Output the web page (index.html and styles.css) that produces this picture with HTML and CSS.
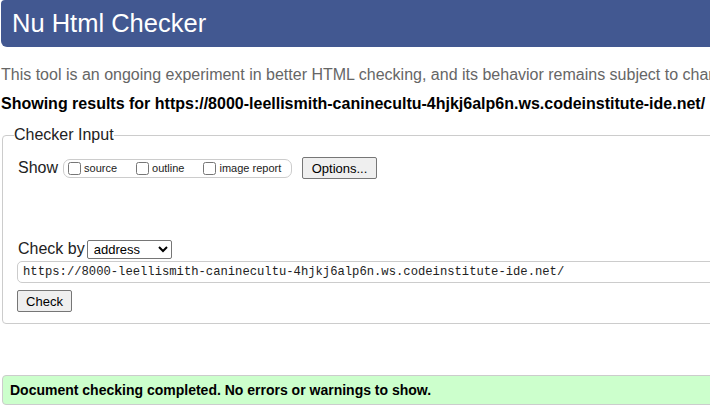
FILE: index.html
```html
<!DOCTYPE html>
<html>
<head>
<meta charset="utf-8">
<title>Nu Html Checker</title>
<link rel="stylesheet" href="styles.css">
</head>
<body>
<div class="page">
  <h1 class="title">Nu Html Checker</h1>
  <p class="intro">This tool is an ongoing experiment in better HTML checking, and its behavior remains subject to change</p>
  <p class="results">Showing results for https://8000-leellismith-caninecultu-4hjkj6alp6n.ws.codeinstitute-ide.net/</p>
  <fieldset class="checker">
    <legend class="legend">Checker Input</legend>
    <div class="show-row">
      <span class="label">Show</span>
      <span class="opts">
        <label class="opt"><input type="checkbox" class="cb">source</label>
        <label class="opt"><input type="checkbox" class="cb">outline</label>
        <label class="opt"><input type="checkbox" class="cb">image report</label>
      </span>
      <button class="btn options">Options...</button>
    </div>
    <div class="check-row">
      <span class="label">Check by</span>
      <select class="sel"><option>address</option></select>
    </div>
    <input class="url" type="text" value="https://8000-leellismith-caninecultu-4hjkj6alp6n.ws.codeinstitute-ide.net/">
    <div class="submit-row"><button class="btn check">Check</button></div>
  </fieldset>
  <p class="status">Document checking completed. No errors or warnings to show.</p>
</div>
</body>
</html>
```
FILE: styles.css
```css
html, body {
  margin: 0;
  padding: 0;
  background: #fff;
  overflow: hidden;
}
body {
  font-family: "Liberation Sans", Arial, sans-serif;
  color: #000;
}
.page {
  width: 960px;
  padding-left: 1px;
}
.title {
  margin: 0;
  height: 47px;
  box-sizing: border-box;
  background: #425891;
  color: #fff;
  font-weight: normal;
  font-size: 25.5px;
  line-height: 47px;
  padding-left: 11px;
  border-radius: 4px 0 0 6px;
}
.intro {
  margin: 18px 0 0 0;
  font-size: 16px;
  line-height: 20px;
  color: #666;
  white-space: nowrap;
}
.results {
  margin: 9px 0 0 0;
  font-size: 16px;
  line-height: 20px;
  font-weight: bold;
  white-space: nowrap;
}
.checker {
  margin: 12px 0 0 1px;
  padding: 0 0 11px 15px;
  border: 1px solid #ccc;
  border-radius: 4px;
  min-width: 0;
}
.legend {
  padding: 0;
  margin-left: -4px;
  font-size: 16px;
  line-height: 18px;
  color: #222;
}
.show-row {
  display: flex;
  align-items: center;
  margin-top: 13px;
  height: 22px;
}
.label {
  font-size: 16px;
  color: #222;
  margin-right: 5px;
}
.opts {
  display: inline-flex;
  align-items: center;
  border: 1px solid #ccc;
  border-radius: 7px;
  height: 17px;
  padding: 0 4px;
  width: 219px;
}
.opt {
  display: inline-flex;
  align-items: center;
  font-size: 11px;
  color: #222;
  margin-right: 19px;
}
.opt:last-child { margin-right: 0; }
.cb {
  margin: 0 3px 0 0;
  width: 13px;
  height: 13px;
}
.btn {
  font-family: "Liberation Sans", Arial, sans-serif;
  font-size: 13px;
  color: #000;
  background: #efefef;
  border: 1px solid #767676;
  border-radius: 2px;
  padding: 1px 6px;
}
.options {
  margin-left: 10px;
  height: 22px;
  width: 75px;
}
.check-row {
  display: flex;
  align-items: center;
  margin-top: 60px;
  height: 20px;
}
.check-row .label {
  margin-right: 2px;
}
.sel {
  font-family: "Liberation Sans", Arial, sans-serif;
  font-size: 13px;
  width: 85px;
  height: 19px;
  border: 1px solid #767676;
  border-radius: 2px;
  background: #fff;
  color: #000;
  padding: 0 2px;
}
.url {
  display: block;
  margin: 2px 0 0 -1px;
  width: 900px;
  height: 22px;
  box-sizing: border-box;
  border: 1px solid #ccc;
  border-radius: 5px;
  padding: 0 5px;
  font-family: "Liberation Mono", "Courier New", monospace;
  font-size: 12.2px;
  color: #222;
}
.submit-row {
  margin-top: 7px;
  margin-left: -1px;
}
.check {
  height: 22px;
  width: 55px;
  padding: 0;
}
.status {
  margin: 51px 0 0 1px;
  height: 30px;
  box-sizing: border-box;
  background: #ccffcc;
  border: 1px solid #ccc;
  border-radius: 4px;
  font-size: 14px;
  font-weight: bold;
  line-height: 28px;
  padding-left: 7px;
}
```
